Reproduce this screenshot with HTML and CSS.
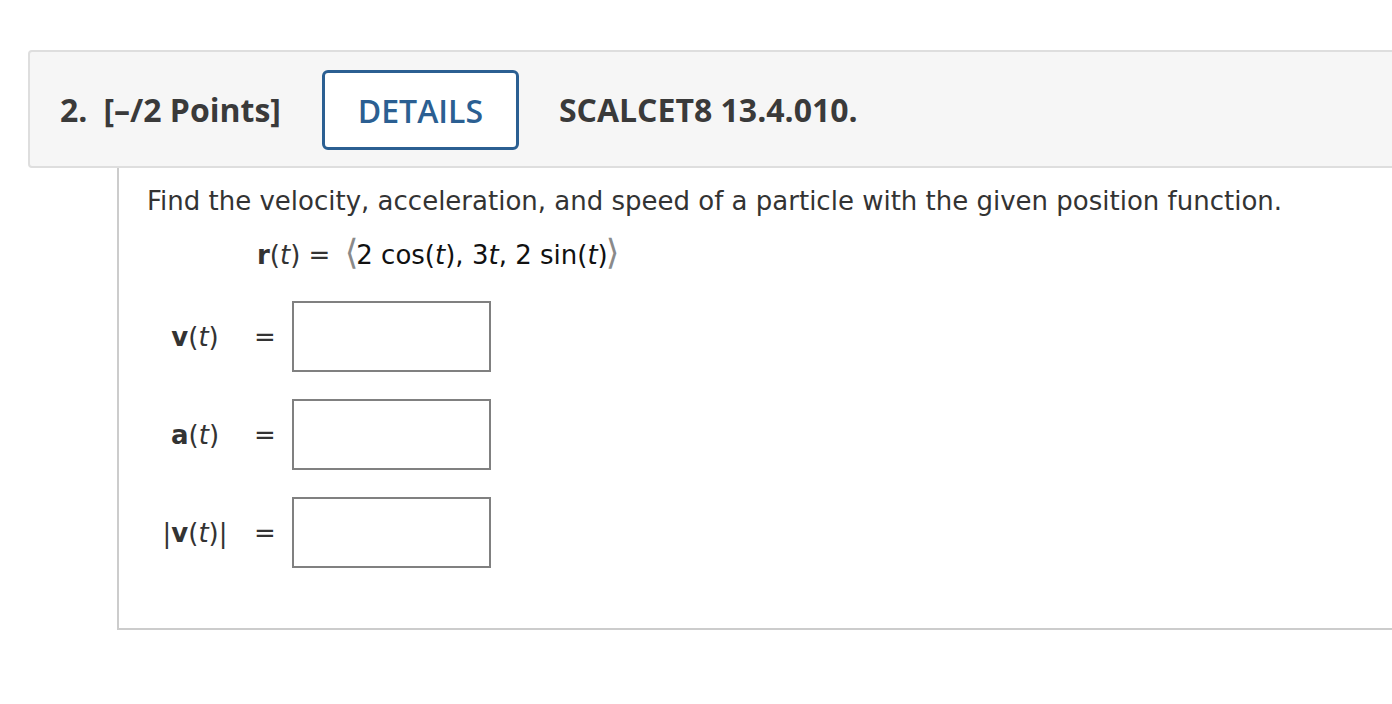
FILE: index.html
```html
<!DOCTYPE html>
<html>

<head>
    <title>Question 2</title>
    <link rel="stylesheet" href="styles.css">
</head>

<body>
    <div class="question">
        <!-- Question header -->
        <div class="q-header">
            <span class="q-num">2.</span>
            <span class="q-points">[&ndash;/2 Points]</span>
            <button class="details">DETAILS</button>
            <span class="q-code">SCALCET8 13.4.010.</span>
        </div>

        <!-- Question body -->
        <div class="q-body">
            <p class="prompt">Find the velocity, acceleration, and speed of a particle with the given position function.</p>
            <div class="given">
                <b>r</b>(<i>t</i>) = <span class="angle open">&#x27E8;</span><span class="vec">2 cos(<i>t</i>), 3<i>t</i>, 2 sin(<i>t</i>)</span><span class="angle close">&#x27E9;</span>
            </div>

            <div class="answers">
                <span class="lbl"><b>v</b>(<i>t</i>)</span>
                <span class="eq">=</span>
                <input type="text" class="ans">

                <span class="lbl"><b>a</b>(<i>t</i>)</span>
                <span class="eq">=</span>
                <input type="text" class="ans">

                <span class="lbl">|<b>v</b>(<i>t</i>)|</span>
                <span class="eq">=</span>
                <input type="text" class="ans">
            </div>
        </div>
    </div>
</body>

</html>
```

FILE: styles.css
```css
/* page */
html {
    overflow: hidden;
}

body {
    margin: 0;
    padding: 50px 0 0 28px;
    background-color: #fff;
    color: #333;
}

.question {
    width: 1400px;
}

/* header bar */
.q-header {
    display: flex;
    align-items: center;
    height: 114px;
    padding-left: 30px;
    background-color: #f6f6f6;
    border: 2px solid #dedede;
    border-radius: 4px 0 0 4px;
    font-family: "Open Sans", sans-serif;
    color: #3a3a3a;
}

.q-num {
    font-size: 32px;
    font-weight: 700;
    margin-right: 16px;
}

.q-points {
    font-size: 32px;
    font-weight: 700;
}

.details {
    width: 197px;
    height: 80px;
    margin-left: 41px;
    margin-top: 2px;
    background-color: #fff;
    border: 3px solid #2b5f92;
    border-radius: 6px;
    color: #2b5f92;
    font-family: "Open Sans", sans-serif;
    font-size: 32px;
    font-weight: 600;
}

.q-code {
    margin-left: 40px;
    font-size: 32px;
    font-weight: 700;
}

/* body */
.q-body {
    margin-left: 89px;
    height: 460px;
    padding-left: 28px;
    border-left: 2px solid #cccccc;
    border-bottom: 2px solid #cccccc;
    font-family: "DejaVu Sans", Verdana, sans-serif;
    font-size: 26px;
}

.prompt {
    margin: 0;
    padding-top: 18px;
    line-height: 30px;
}

.given {
    margin-top: 21px;
    margin-left: 110px;
    line-height: 30px;
}

.given .vec {
    color: #111;
}

.angle {
    color: #8a8a8a;
    font-size: 35px;
    line-height: 30px;
}

.angle.open {
    padding-left: 6px;
    margin-right: -2px;
}

.angle.close {
    margin-left: -2px;
}

.answers {
    display: grid;
    grid-template-columns: 96px 49px 199px;
    row-gap: 27px;
    align-items: center;
    margin-top: 31px;
}

.lbl {
    text-align: center;
}

.eq {
    padding-left: 11px;
}

.ans {
    box-sizing: border-box;
    width: 199px;
    height: 71px;
    margin: 0;
    border: 2px solid #808080;
    background-color: #fff;
}
```
